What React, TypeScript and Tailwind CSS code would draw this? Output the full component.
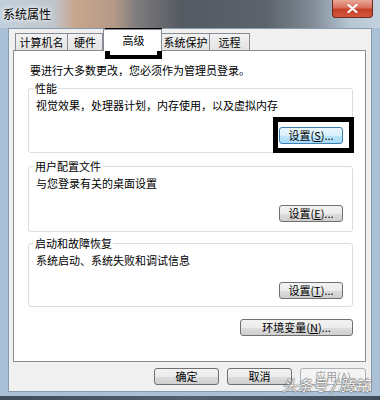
import type { ReactNode } from "react";

const FONT = "font-['Noto_Sans_CJK_SC','Noto_Sans',sans-serif]";

function Btn({
  children,
  width,
  tone = "normal",
}: {
  children: ReactNode;
  width: string;
  tone?: "normal" | "hot" | "disabled";
}) {
  const toneCls =
    tone === "hot"
      ? "border-[#3c7fb1] bg-[linear-gradient(#eaf6fd_0%,#d9f0fc_50%,#bee6fd_51%,#a7d9f5_100%)] text-black"
      : tone === "disabled"
        ? "border-[#adb2b5] bg-[#f4f4f4] text-[#a0a0a0]"
        : "border-[#707070] bg-[linear-gradient(#f2f2f2_0%,#ebebeb_50%,#dddddd_51%,#cfcfcf_100%)] text-black";
  return (
    <div
      className={`flex h-[17px] items-center justify-center rounded-[3px] border text-[11px] leading-none ${toneCls} ${width}`}
    >
      {children}
    </div>
  );
}

function Group({
  label,
  text,
  height,
  button,
}: {
  label: string;
  text: string;
  height: string;
  button: ReactNode;
}) {
  return (
    <div
      className={`relative ml-[14px] mr-[12px] rounded-[3px] border border-[#d5dfe5] ${height}`}
    >
      <span className="absolute left-[5px] top-[-8px] bg-white px-[1px] text-[11px] leading-[14px]">
        {label}
      </span>
      <div className="pl-[7px] pt-[9px] text-[11px] leading-[14px]">{text}</div>
      <div className="mr-[9px] mt-[15px] flex justify-end">{button}</div>
    </div>
  );
}

function Tab({ children, width }: { children: ReactNode; width: string }) {
  return (
    <div
      className={`flex h-[17px] items-center justify-center border border-b-0 border-[#898c95] bg-[linear-gradient(#f2f2f2,#e3e3e3)] text-[11px] leading-none ${width}`}
    >
      {children}
    </div>
  );
}

export default function App() {
  return (
    <div
      className={`relative h-[400px] w-[380px] overflow-hidden bg-[#aac0d6] text-black ${FONT}`}
    >
      {/* title bar */}
      <div className="flex h-[28px] items-start bg-[linear-gradient(90deg,#c2d0dd_0%,#bfc6cc_14%,#c9a58d_20%,#b49a88_30%,#7e7b7c_36%,#545a62_48%,#5c636b_70%,#7f8a95_82%,#b7c6d4_92%,#c3d1de_100%)]">
        <span className="ml-[3px] mt-[6px] text-[12px] leading-[16px] [text-shadow:0_0_4px_#ffffff,0_0_6px_#ffffff]">
          系统属性
        </span>
        <div className="ml-auto mr-[7px] flex h-[18px] w-[41px] items-center justify-center rounded-b-[4px] border border-t-0 border-[#6e2a1c] bg-[linear-gradient(#e9a899_0%,#d8705c_45%,#c5402a_55%,#d2583d_100%)]">
          <svg width="11" height="9" viewBox="0 0 11 9">
            <path
              d="M1.5 1 L9.5 8 M9.5 1 L1.5 8"
              stroke="#ffffff"
              strokeWidth="2.2"
              strokeLinecap="round"
            />
          </svg>
        </div>
      </div>

      {/* client */}
      <div className="mx-[8px] flex h-[364px] flex-col border border-[#8a9aaa] bg-[#f0f0f0]">
        <div className="flex h-[21px] items-end pl-[6px]">
          <Tab width="w-[53px]">计算机名</Tab>
          <Tab width="w-[35px] border-l-0">硬件</Tab>
          <div className="relative z-10 mb-[-1px] flex h-[22px] w-[59px] items-start justify-center border border-b-0 border-[#898c95] bg-white pt-[3px] text-[11px] leading-[14px]">
            <span className="pl-[2px]">高级</span>
          </div>
          <Tab width="w-[48px] border-l-0">系统保护</Tab>
          <Tab width="w-[40px] border-l-0">远程</Tab>
        </div>

        <div className="ml-[4px] mr-[5px] h-[312px] border border-[#898c95] bg-white">
          <div className="pl-[16px] pt-[12px] text-[11px] leading-[14px]">
            要进行大多数更改，您必须作为管理员登录。
          </div>
          <div className="mt-[11px]">
            <Group
              label="性能"
              text="视觉效果，处理器计划，内存使用，以及虚拟内存"
              height="h-[65px]"
              button={
                <Btn width="w-[64px]" tone="hot">
                  设置(<u>S</u>)...
                </Btn>
              }
            />
          </div>
          <div className="mt-[13px]">
            <Group
              label="用户配置文件"
              text="与您登录有关的桌面设置"
              height="h-[66px]"
              button={
                <Btn width="w-[64px]">
                  设置(<u>E</u>)...
                </Btn>
              }
            />
          </div>
          <div className="mt-[11px]">
            <Group
              label="启动和故障恢复"
              text="系统启动、系统失败和调试信息"
              height="h-[64px]"
              button={
                <Btn width="w-[64px]">
                  设置(<u>T</u>)...
                </Btn>
              }
            />
          </div>
          <div className="mr-[12px] mt-[12px] flex justify-end">
            <Btn width="w-[113px]">
              环境变量(<u>N</u>)...
            </Btn>
          </div>
        </div>

        <div className="mt-[6px] flex justify-end gap-[8px] pr-[5px]">
          <Btn width="w-[65px]">确定</Btn>
          <Btn width="w-[65px]">取消</Btn>
          <Btn width="w-[66px]" tone="disabled">
            应用(<u>A</u>)
          </Btn>
        </div>
      </div>

      {/* bottom edge */}
      <div className="absolute bottom-0 left-0 h-[4px] w-full bg-[linear-gradient(90deg,#3f4c5a,#55606c_50%,#3f4c5a)]" />

      {/* annotation boxes */}
      <div className="pointer-events-none absolute left-[105px] top-[28px] h-[31px] w-[57px] border-x-[5px] border-y-[4px] border-black" />
      <div className="pointer-events-none absolute left-[273px] top-[117px] h-[36px] w-[81px] border-[5px] border-black" />

      {/* watermark */}
      <div className="pointer-events-none absolute left-[282px] top-[375px] text-[15px] italic leading-[20px] text-[#f6f6f6] [text-shadow:0_0_1px_#555,0_0_1px_#555,0_0_2px_#888]">
        头条号 / 腾铭
      </div>
    </div>
  );
}
